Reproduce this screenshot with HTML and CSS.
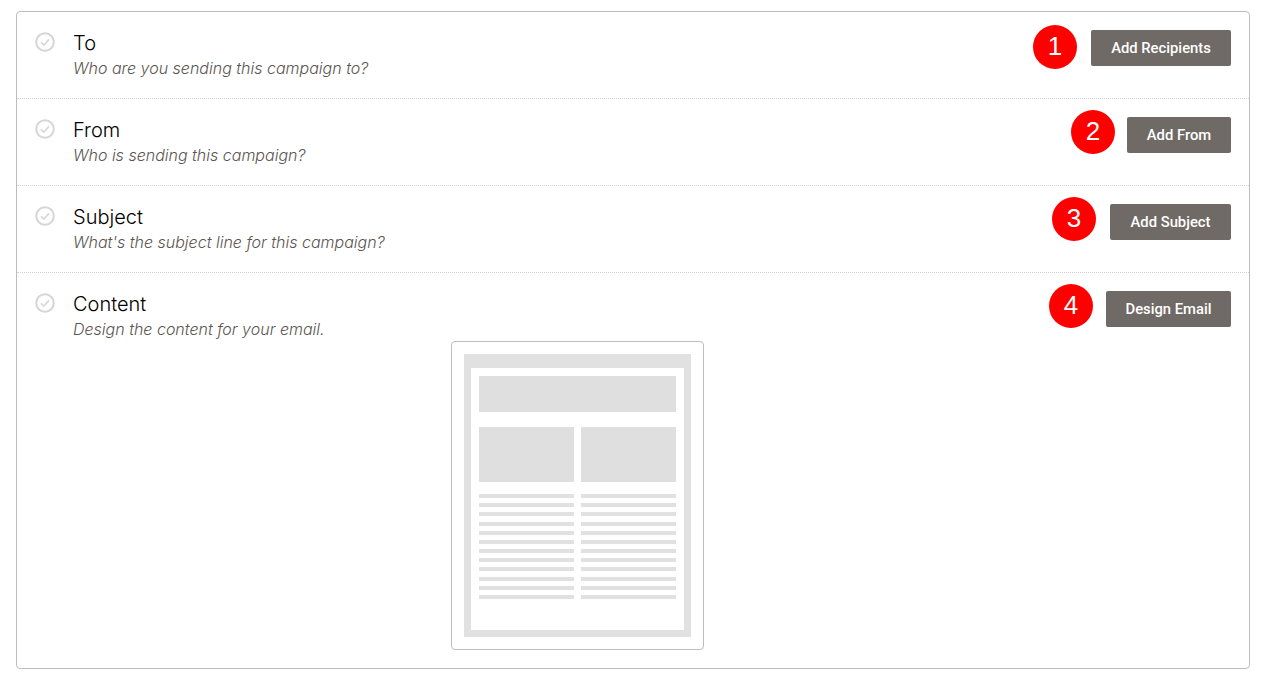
FILE: index.html
```html
<!DOCTYPE html>
<html>
<head>
    <title>Campaign Checklist</title>
    <link rel="stylesheet" href="styles.css">
</head>
<body>
    <div class="checklist">
        <!-- To -->
        <div class="row">
            <svg class="check" viewBox="0 0 20 20"><circle cx="10" cy="10" r="8.8"/><path d="M6 10.4l2.8 2.8L14 7.4"/></svg>
            <div class="row-text">
                <div class="row-title">To</div>
                <div class="row-sub">Who are you sending this campaign to?</div>
            </div>
            <div class="row-action">
                <span class="badge">1</span>
                <button class="btn btn-to">Add Recipients</button>
            </div>
        </div>
        <!-- From -->
        <div class="row">
            <svg class="check" viewBox="0 0 20 20"><circle cx="10" cy="10" r="8.8"/><path d="M6 10.4l2.8 2.8L14 7.4"/></svg>
            <div class="row-text">
                <div class="row-title">From</div>
                <div class="row-sub">Who is sending this campaign?</div>
            </div>
            <div class="row-action gap-small">
                <span class="badge">2</span>
                <button class="btn btn-from">Add From</button>
            </div>
        </div>
        <!-- Subject -->
        <div class="row">
            <svg class="check" viewBox="0 0 20 20"><circle cx="10" cy="10" r="8.8"/><path d="M6 10.4l2.8 2.8L14 7.4"/></svg>
            <div class="row-text">
                <div class="row-title">Subject</div>
                <div class="row-sub">What's the subject line for this campaign?</div>
            </div>
            <div class="row-action">
                <span class="badge">3</span>
                <button class="btn btn-subject">Add Subject</button>
            </div>
        </div>
        <!-- Content -->
        <div class="row row-last">
            <svg class="check" viewBox="0 0 20 20"><circle cx="10" cy="10" r="8.8"/><path d="M6 10.4l2.8 2.8L14 7.4"/></svg>
            <div class="row-text">
                <div class="row-title">Content</div>
                <div class="row-sub">Design the content for your email.</div>
                <div class="preview">
                    <div class="preview-frame">
                        <div class="preview-page">
                            <div class="block-hero"></div>
                            <div class="block-cols">
                                <div class="block-col"></div>
                                <div class="block-col"></div>
                            </div>
                            <div class="lines">
                                <i></i><i></i><i></i><i></i><i></i><i></i><i></i><i></i><i></i><i></i><i></i><i></i>
                                <i></i><i></i><i></i><i></i><i></i><i></i><i></i><i></i><i></i><i></i><i></i><i></i>
                            </div>
                        </div>
                    </div>
                </div>
            </div>
            <div class="row-action gap-mid">
                <span class="badge">4</span>
                <button class="btn btn-design">Design Email</button>
            </div>
        </div>
    </div>
</body>
</html>
```

FILE: styles.css
```css
/* General Body Styles */
body {
    margin: 0;
    padding: 11px 19px 16px 16px;
    background-color: #fff;
    font-family: 'Inter', sans-serif;
}

/* Outer panel */
.checklist {
    border: 1px solid #bdbdbd;
    border-radius: 4px;
    background: #fff;
}

/* Rows */
.row {
    display: flex;
    align-items: flex-start;
    height: 86px;
    box-sizing: content-box;
    border-bottom: 1px dotted #d4d4d4;
    padding-right: 18px;
}

.row-last {
    height: auto;
    border-bottom: none;
    padding-bottom: 18px;
}

.check {
    flex: none;
    width: 20px;
    height: 20px;
    margin: 20px 0 0 17.5px;
    fill: none;
    stroke: #d6d6d6;
    stroke-width: 2;
}

.check path {
    stroke-width: 1.6;
}

.row-text {
    flex: 1;
    padding: 18px 0 0 18.5px;
}

.row-title {
    font-size: 20px;
    line-height: 26px;
    font-weight: 350;
    color: #000;
}

.row-sub {
    margin-top: 1px;
    font-size: 16px;
    line-height: 22px;
    font-style: italic;
    font-weight: 300;
    color: #5b5551;
}

/* Button + number */
.row-action {
    display: flex;
    align-items: flex-start;
    gap: 14px;
}

.gap-small {
    gap: 12px;
}

.gap-mid {
    gap: 13px;
}

.badge {
    width: 44px;
    height: 44px;
    margin-top: 11px;
    border-radius: 50%;
    background: #f00;
    color: #fff;
    font-family: 'Liberation Sans', sans-serif;
    font-size: 26px;
    line-height: 42px;
    text-align: center;
}

/* first number sits a little lower than the others */
.row:first-child .badge {
    margin-top: 13px;
}

.btn {
    height: 36px;
    margin-top: 18px;
    padding: 0;
    border: none;
    border-radius: 2px;
    background-color: #6f6a66;
    color: #fff;
    font-family: 'Roboto', sans-serif;
    font-size: 14.8px;
    font-weight: 500;
}

.btn-to {
    width: 140px;
}

.btn-from {
    width: 104px;
}

.btn-subject {
    width: 121px;
}

.btn-design {
    width: 125px;
}

/* Email layout preview */
.preview {
    box-sizing: border-box;
    width: 253px;
    height: 309px;
    margin: 1px 0 0 378px;
    padding: 12px;
    border: 1px solid #bdbdbd;
    border-radius: 4px;
}

.preview-frame {
    height: 283px;
    box-sizing: border-box;
    padding: 14px 7px 7px;
    background: #e1e1e1;
}

.preview-page {
    height: 100%;
    box-sizing: border-box;
    padding: 8px;
    background: #fff;
}

.block-hero {
    height: 36px;
    background: #dfdfdf;
}

.block-cols {
    display: grid;
    grid-template-columns: 1fr 1fr;
    column-gap: 7px;
    margin-top: 15px;
}

.block-col {
    height: 55px;
    background: #dfdfdf;
}

.lines {
    display: grid;
    grid-template-columns: 1fr 1fr;
    grid-auto-flow: column;
    grid-template-rows: repeat(12, 4px);
    column-gap: 7px;
    row-gap: 5.18px;
    margin-top: 12px;
}

.lines i {
    display: block;
    background: #e1e1e1;
}
```
